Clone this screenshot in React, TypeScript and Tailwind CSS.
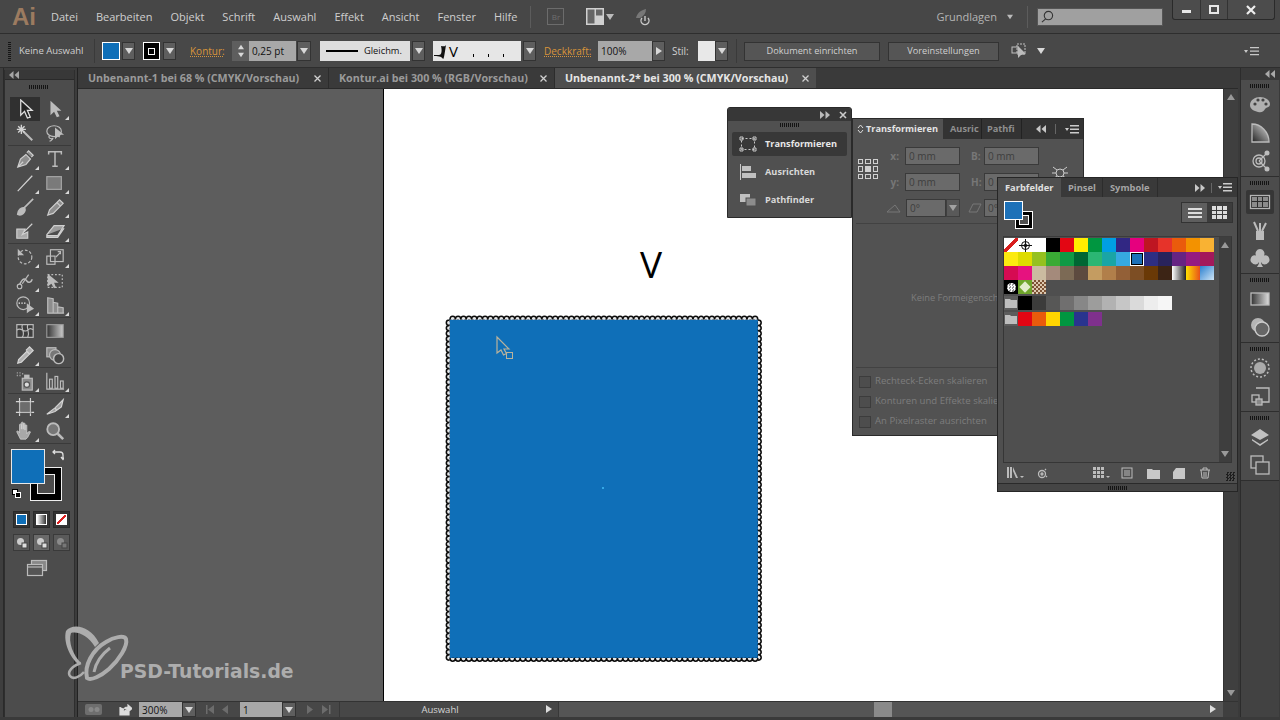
import React from 'react';

const G = '#bcbcbc';

const Tri = ({ dir = 'down', c = '#d8d8d8', s = 8 }: { dir?: string; c?: string; s?: number }) => {
  const d = dir === 'down' ? 'M0 1h8L4 7z' : dir === 'right' ? 'M1 0v8L7 4z' : dir === 'left' ? 'M7 0v8L1 4z' : 'M0 7h8L4 1z';
  return (
    <svg width={s} height={s} viewBox="0 0 8 8">
      <path d={d} fill={c} />
    </svg>
  );
};

const Drop = ({ className = '' }: { className?: string }) => (
  <div className={`flex items-center justify-center bg-[#5e5e5e] border border-[#333] ${className}`}>
    <Tri />
  </div>
);

const Grip = ({ className = '' }: { className?: string }) => (
  <div className={`h-[4px] bg-[repeating-linear-gradient(90deg,#141414_0,#141414_1px,transparent_1px,transparent_2px)] ${className}`} />
);

const Arrows = ({ dir = 'left', c = '#b5b5b5' }: { dir?: string; c?: string }) => (
  <svg width="10" height="8" viewBox="0 0 10 8">
    {dir === 'left' ? <path d="M4.500 0v8L0 4zM10 0v8L5.500 4z" fill={c} /> : <path d="M0 0v8l4.500-4zM5.500 0v8L10 4z" fill={c} />}
  </svg>
);

const Svg = ({ children, s = 22 }: { children: React.ReactNode; s?: number }) => (
  <svg width={s} height={s} viewBox="0 0 22 22" fill="none" stroke={G} strokeWidth="1.300">
    {children}
  </svg>
);

const toolIcons: Record<string, React.ReactNode> = {
  select: <path d="M6 1v16l4-4 3 7 3-1-3-7h5z" fill="#222" stroke="#e0e0e0" />,
  direct: <path d="M6 2v16l4-4 3 6 3-1-3-6h5z" fill={G} stroke="none" />,
  wand: (
    <>
      <path d="M9 9l10 10" strokeWidth="2.200" />
      <path d="M7 2v10M2 7h10M3.500 3.500l7 7M10.500 3.500l-7 7" strokeWidth="1.500" stroke="#d4d4d4" />
    </>
  ),
  lasso: (
    <>
      <ellipse cx="10" cy="9" rx="8" ry="6" />
      <path d="M5 14c-2 2 1 4 3 3s-1 3-3 3" />
      <path d="M11 5v13l3-3 2 1 1-3 4 0z" fill={G} stroke="none" />
    </>
  ),
  pen: <path d="M3 20l3-9 6-5 5 5-5 6zM3 20l6-6M13 4l2-2 5 5-2 2" fill="#8e8e8e" stroke="#cfcfcf" />,
  type: <path d="M4 6V3h14v3M11 3v16M8 19h6" strokeWidth="1.600" />,
  line: <path d="M3 20L19 3" strokeWidth="1.300" stroke="#d4d4d4" />,
  rect: <rect x="2" y="4" width="16" height="14" fill="#7a7a7a" stroke="#a5a5a5" />,
  brush: <path d="M20 2L10 12M3 19c0-4 4-8 7-7 2 1 1 4-1 6s-4 2-6 1z" fill={G} strokeWidth="1.800" />,
  pencil: <path d="M3 20l2-6L16 3l4 4L9 18zM13 6l4 4" fill="#8e8e8e" stroke="#cfcfcf" />,
  blob: <path d="M2 9h9l-3 6 6-3v7H2zM10 12l9-9" fill="#a8a8a8" stroke="#cfcfcf" />,
  eraser: <path d="M2 15L10 5h11l-7 11H2zM2 15v3h12l7-10" fill="#9c9c9c" stroke="#cfcfcf" />,
  rotate: (
    <>
      <circle cx="11" cy="11" r="7.500" strokeDasharray="3 2" />
      <path d="M3 2v7h7z" strokeWidth="0" fill={G} />
    </>
  ),
  scale: (
    <>
      <rect x="2" y="10" width="9" height="9" />
      <rect x="6" y="3" width="14" height="13" />
      <path d="M12 11l5-5M14 5h3v3" />
    </>
  ),
  warp: (
    <>
      <path d="M3 19c3-6 6-14 10-8 2 3 5 1 6-2" strokeWidth="1.600" />
      <circle cx="5" cy="17" r="2.500" fill="#444" />
      <path d="M8 14l7-10" />
    </>
  ),
  free: (
    <>
      <rect x="3" y="4" width="16" height="14" strokeDasharray="2 2" />
      <path d="M3 3v14l4-3 3 5 2-1-2-5h5z" fill={G} stroke="none" />
    </>
  ),
  shape: (
    <>
      <circle cx="9" cy="9" r="7" />
      <path d="M4 9h9" strokeDasharray="1.500 1.500" stroke="#eee" />
      <path d="M13 9v11l3-2 5-3z" fill={G} stroke="none" />
    </>
  ),
  persp: <path d="M3 3l6 1v16H3zM9 8l5 1v11H9zM14 13l6 1v6h-6zM3 20h18" fill="#8d8d8d" />,
  mesh: (
    <>
      <rect x="2" y="4" width="18" height="14" fill="#3d3d3d" />
      <path d="M2 10c5-4 8 4 12 0s4 0 6-1M8 4c-2 5 4 8 0 14M14 4c-2 5 3 8 0 14" />
    </>
  ),
  grad: (
    <>
      <defs>
        <linearGradient id="tg" x1="0" x2="1">
          <stop offset="0" stopColor="#333" />
          <stop offset="1" stopColor="#ccc" />
        </linearGradient>
      </defs>
      <rect x="2" y="4" width="18" height="14" fill="url(#tg)" stroke="#999" />
    </>
  ),
  eyedrop: <path d="M3 20l1-4 9-9 3 3-9 9zM12 6l2-2 2-2 4 4-4 4-2-2" fill="#b0b0b0" stroke="#d4d4d4" />,
  blend: (
    <>
      <rect x="2" y="3" width="10" height="10" fill="#8a8a8a" />
      <circle cx="11" cy="11" r="6" fill="#777" />
      <circle cx="15" cy="15" r="5.500" fill="#444" strokeWidth="1.600" />
    </>
  ),
  spray: (
    <>
      <rect x="8" y="8" width="11" height="13" fill="#8a8a8a" />
      <circle cx="13" cy="15" r="3" fill="#ddd" stroke="#555" />
      <rect x="10" y="4" width="6" height="4" fill={G} stroke="none" />
      <path d="M2 2h1M5 2h1M2 5h1M5 5h1M8 3h1" strokeWidth="1.500" />
    </>
  ),
  graph: (
    <>
      <path d="M2 2v18h19" />
      <rect x="5" y="9" width="3" height="10" />
      <rect x="11" y="6" width="3" height="13" />
      <rect x="17" y="11" width="3" height="8" />
    </>
  ),
  artboard: (
    <>
      <rect x="5" y="5" width="12" height="12" fill="#6d6d6d" />
      <path d="M1 5h20M1 17h20M5 1v20M17 1v20" stroke="#d4d4d4" strokeDasharray="5 12" />
    </>
  ),
  slice: <path d="M2 19l9-7 9-9-2 8-7 5zM11 12l2 3" fill="#a0a0a0" stroke="#d4d4d4" />,
  hand: <path d="M6 20L2 12c0-2 2-1 3 1V4c0-1 2-1 2 0v5-7c0-1 2-1 2 0v7-6c0-1 2-1 2 0v7-5c0-1 2-1 2 0v9c1-2 3-3 4-2l-3 6-2 2z" fill="#a8a8a8" stroke="#d4d4d4" strokeWidth="0.800" />,
  zoom: (
    <>
      <circle cx="9" cy="9" r="6.500" strokeWidth="2" fill="#777" />
      <path d="M14 14l6 6" strokeWidth="2.800" />
    </>
  ),
};

const toolGroups: [string, boolean, string, boolean][][] = [
  [
    ['select', false, 'direct', true],
    ['wand', false, 'lasso', false],
  ],
  [
    ['pen', true, 'type', true],
    ['line', true, 'rect', true],
    ['brush', false, 'pencil', true],
    ['blob', false, 'eraser', true],
  ],
  [
    ['rotate', true, 'scale', true],
    ['warp', true, 'free', false],
    ['shape', true, 'persp', true],
  ],
  [
    ['mesh', false, 'grad', false],
    ['eyedrop', true, 'blend', false],
  ],
  [['spray', true, 'graph', true]],
  [
    ['artboard', false, 'slice', true],
    ['hand', true, 'zoom', false],
  ],
];

const Tool = ({ name, fly }: { name: string; fly: boolean }) => (
  <div className={`relative w-[30px] h-[24px] flex items-center justify-center ${name === 'select' ? 'bg-[#303030]' : ''}`}>
    <Svg s={name === 'select' ? 21 : 20}>{toolIcons[name]}</Svg>
    {fly && <div className="absolute right-[1px] bottom-[1px] w-0 h-0 border-l-[4px] border-l-transparent border-b-[4px] border-b-[#d8d8d8]" />}
  </div>
);

const ToolBar = () => (
  <div className="w-[78px] bg-[#3c3c3c] flex border-r border-[#222]">
    <div className="w-[4px] bg-[#3e3e3e] border-r border-[#2a2a2a]" />
    <div className="w-[71px] bg-[#4c4c4c] border-x border-[#2e2e2e] flex flex-col mt-[2px] ml-[0px]">
      <div className="h-[10px] bg-[#383838] border-b border-[#2a2a2a] flex items-center pl-[4px] shrink-0">
        <Arrows c="#a5a5a5" />
      </div>
      <Grip className="w-[19px] mx-auto mt-[5px] mb-[8px] shrink-0 relative left-[-1px]" />
      {toolGroups.map((g, i) => (
        <div key={i} className="mx-[3px] pl-[2px] border-b border-[#3a3a3a] mb-[1px]">
          {g.map((r) => (
            <div key={r[0]} className="flex">
              <Tool name={r[0]} fly={r[1]} />
              <Tool name={r[2]} fly={r[3]} />
            </div>
          ))}
        </div>
      ))}
      <div className="relative h-[61px]">
        <div className="absolute left-[25px] top-[22px] w-[32px] h-[34px] bg-black border border-[#eee] flex items-center justify-center">
          <div className="w-[18px] h-[20px] bg-[#4c4c4c] border border-[#eee]" />
        </div>
        <div className="absolute left-[6px] top-[4px] w-[34px] h-[35px] bg-[#0f6fb8] border border-[#e8e8e8]" />
        <svg className="absolute left-[47px] top-[4px]" width="12" height="12" viewBox="0 0 12 12" fill="none" stroke="#ddd" strokeWidth="1.300">
          <path d="M1 3h7q3 0 3 3v4M3 1L1 3l2 2M9 8l2 2.500L13 8" />
        </svg>
        <div className="absolute left-[7px] top-[44px] w-[6px] h-[6px] bg-white border border-black" />
        <div className="absolute left-[10px] top-[47px] w-[6px] h-[6px] bg-black border border-white" />
      </div>
      <div className="flex gap-[3px] pl-[8px] mt-[5px]">
        <div className="w-[17px] h-[17px] bg-[#333] border border-[#2a2a2a] flex items-center justify-center">
          <div className="w-[11px] h-[11px] bg-[#0f6fb8] border border-white" />
        </div>
        <div className="w-[17px] h-[17px] bg-[#333] border border-[#2a2a2a] flex items-center justify-center">
          <div className="w-[11px] h-[11px] bg-[linear-gradient(90deg,#fff,#333)] border border-white" />
        </div>
        <div className="w-[17px] h-[17px] bg-[#333] border border-[#2a2a2a] flex items-center justify-center">
          <div className="w-[11px] h-[11px] bg-[linear-gradient(135deg,#fff_42%,#d22_42%,#d22_58%,#fff_58%)] border border-white" />
        </div>
      </div>
      <div className="flex gap-[3px] pl-[8px] mt-[6px]">
        {[0, 1, 2].map((i) => (
          <div key={i} className={`w-[17px] h-[17px] flex items-center justify-center border border-[#3a3a3a] ${i === 1 ? 'bg-[#6a6a6a]' : 'bg-[#5a5a5a]'}`}>
            <svg width="12" height="12" viewBox="0 0 12 12">
              <circle cx="4.500" cy="4.500" r="3.500" fill={i === 2 ? '#8a8a8a' : '#ccc'} />
              <rect x="6" y="6" width="5" height="5" fill={i === 2 ? '#777' : '#ddd'} stroke="#444" />
            </svg>
          </div>
        ))}
      </div>
      <div className="flex justify-center mt-[8px] pr-[5px]">
        <svg width="22" height="18" viewBox="0 0 22 18" fill="none" stroke="#bbb" strokeWidth="1.200">
          <rect x="5.500" y="1.500" width="15" height="10" fill="#888" />
          <rect x="1.500" y="5.500" width="15" height="11" fill="#555" />
          <path d="M1.500 8h15" />
        </svg>
      </div>
    </div>
  </div>
);

const swRows = [
  ['', 'reg', 'bg-white', 'bg-black', 'bg-[#e30613]', 'bg-[#ffed00]', 'bg-[#009640]', 'bg-[#009fe3]', 'bg-[#312783]', 'bg-[#e6007e]', 'bg-[#be1622]', 'bg-[#e6332a]', 'bg-[#ea5b0c]', 'bg-[#f39200]', 'bg-[#f9b233]'],
  ['bg-[#fcea10]', 'bg-[#dedc00]', 'bg-[#95c11f]', 'bg-[#3aaa35]', 'bg-[#0f9a45]', 'bg-[#006633]', 'bg-[#2bb673]', 'bg-[#1aa5a5]', 'bg-[#36a9e1]', 'sel', 'bg-[#2d2e83]', 'bg-[#29235c]', 'bg-[#662483]', 'bg-[#951b81]', 'bg-[#a3195b]'],
  ['bg-[#d60b52]', 'bg-[#e6127f]', 'bg-[#cbbba0]', 'bg-[#a48a7b]', 'bg-[#7c6a55]', 'bg-[#5d4a3f]', 'bg-[#c49c61]', 'bg-[#b17f4a]', 'bg-[#936037]', 'bg-[#7d4e24]', 'bg-[#6a3906]', 'bg-[#3c2415]', 'bg-[linear-gradient(90deg,#fff,#222)]', 'bg-[linear-gradient(90deg,#ffe000,#e8501a)]', 'bg-[linear-gradient(135deg,#2a80d0,#cfe4f5)]'],
];
const grays = ['bg-black', 'bg-[#3c3c3b]', 'bg-[#575756]', 'bg-[#706f6f]', 'bg-[#878787]', 'bg-[#9d9d9c]', 'bg-[#b2b2b2]', 'bg-[#c6c6c6]', 'bg-[#dadada]', 'bg-[#ededed]', 'bg-[#f6f6f6]'];
const brights = ['bg-[#e30613]', 'bg-[#ea5b0c]', 'bg-[#ffd500]', 'bg-[#009640]', 'bg-[#29348e]', 'bg-[#7f318d]'];

const Folder = () => (
  <div className="w-[14px] h-[14px] bg-[#5c5c5c] flex items-center justify-center">
    <svg width="12" height="10" viewBox="0 0 12 10">
      <path d="M0 1h5l1 1h6v8H0z" fill="#bdbdbd" />
    </svg>
  </div>
);

const Swatch = ({ c }: { c: string }) => {
  if (c === '')
    return <div className="w-[14px] h-[14px] bg-[linear-gradient(135deg,#fff_40%,#d81e1e_40%,#d81e1e_58%,#fff_58%)]" />;
  if (c === 'reg')
    return (
      <div className="w-[14px] h-[14px] bg-white flex items-center justify-center">
        <svg width="13" height="13" viewBox="0 0 13 13" fill="none" stroke="#111">
          <circle cx="6.500" cy="6.500" r="4" />
          <circle cx="6.500" cy="6.500" r="1.500" />
          <path d="M6.500 0v13M0 6.500h13" />
        </svg>
      </div>
    );
  if (c === 'sel')
    return (
      <div className="w-[14px] h-[14px] bg-black border border-white flex items-center justify-center">
        <div className="w-[10px] h-[10px] bg-[#1d71b8]" />
      </div>
    );
  return <div className={`w-[14px] h-[14px] ${c}`} />;
};

const SwatchPanel = () => (
  <div className="absolute left-[997px] top-[177px] w-[241px] h-[315px] bg-[#4f4f4f] border border-[#262626] flex flex-col">
    <div className="h-[19px] bg-[#393939] flex items-center text-[9.3px] font-bold text-[#a5a5a5] shrink-0">
      <div className="w-[63px] h-full bg-[#4f4f4f] text-[#e0e0e0] flex items-center pl-[7px]">Farbfelder</div>
      <div className="w-[42px] h-full flex items-center pl-[7px] border-r border-[#2c2c2c]">Pinsel</div>
      <div className="w-[55px] h-full flex items-center pl-[7px] border-r border-[#2c2c2c]">Symbole</div>
      <div className="flex-1 flex items-center justify-end pr-[5px] gap-[6px]">
        <Arrows dir="right" c="#c8c8c8" />
        <div className="w-[1px] h-[10px] bg-[#666]" />
        <svg width="14" height="9" viewBox="0 0 14 9" fill="#ccc">
          <path d="M0 3h4L2 6zM5 0h9v1.500H5zM5 3.500h9V5H5zM5 7h9v1.500H5z" />
        </svg>
      </div>
    </div>
    <div className="relative h-[39px] shrink-0">
      <div className="absolute left-[17px] top-[14px] w-[18px] h-[18px] bg-black border border-white flex items-center justify-center">
        <div className="w-[10px] h-[10px] bg-[#4f4f4f] border border-white" />
      </div>
      <div className="absolute left-[6px] top-[4px] w-[19px] h-[19px] bg-[#1d71b8] border border-white" />
      <div className="absolute right-[4px] top-[5px] flex bg-[#3c3c3c] border border-[#333]">
        <div className="w-[25px] h-[19px] bg-[#5e5e5e] flex flex-col items-center justify-center gap-[2px]">
          <div className="w-[14px] h-[2px] bg-[#ddd]" />
          <div className="w-[14px] h-[2px] bg-[#ddd]" />
          <div className="w-[14px] h-[2px] bg-[#ddd]" />
        </div>
        <div className="w-[25px] h-[19px] grid grid-cols-3 gap-[1px] px-[5px] py-[3px]">
          {[0, 1, 2, 3, 4, 5, 6, 7, 8].map((i) => (
            <div key={i} className="bg-[#ddd]" />
          ))}
        </div>
      </div>
    </div>
    <div className="mx-[5px] flex-1 flex border border-[#363636] border-t-[#3c3c3c]">
      <div className="flex-1 pt-[1px]">
        {swRows.map((r, i) => (
          <div key={i} className="flex">
            {r.map((c, j) => (
              <Swatch key={j} c={c} />
            ))}
          </div>
        ))}
        <div className="flex">
          <div className="w-[14px] h-[14px] bg-black flex items-center justify-center">
            <div className="w-[9px] h-[9px] rounded-full bg-[repeating-conic-gradient(#fff_0_25%,#999_0_50%)] bg-[length:3px_3px]" />
          </div>
          <div className="w-[14px] h-[14px] bg-[#6fa52c] flex items-center justify-center">
            <div className="w-[8px] h-[8px] rotate-45 bg-[#e3eccd]" />
          </div>
          <div className="w-[14px] h-[14px] bg-[repeating-conic-gradient(#7c5234_0_25%,#dcc9b0_0_50%)] bg-[length:4px_4px]" />
        </div>
        <div className="flex mt-[2px]">
          <Folder />
          {grays.map((c) => (
            <div key={c} className={`w-[14px] h-[14px] ${c}`} />
          ))}
        </div>
        <div className="flex mt-[2px]">
          <Folder />
          {brights.map((c) => (
            <div key={c} className={`w-[14px] h-[14px] ${c}`} />
          ))}
        </div>
      </div>
      <div className="w-[12px] bg-[#3e3e3e] flex flex-col items-center justify-between py-[4px]">
        <Tri dir="up" c="#9a9a9a" />
        <Tri c="#9a9a9a" />
      </div>
    </div>
    <div className="h-[20px] shrink-0 relative flex items-center text-[#c8c8c8]">
      <svg className="ml-[9px]" width="18" height="12" viewBox="0 0 18 12" fill={G}>
        <path d="M0 0h2v11H0zM3 0h2v11H3zM6 0l5 11H9L6 4zM13 9h4l-2 2z" />
      </svg>
      <svg className="ml-[12px]" width="11" height="11" viewBox="0 0 11 11" fill="none" stroke={G} strokeWidth="1.300">
        <circle cx="5" cy="6" r="3.500" />
        <circle cx="5" cy="6" r="1" />
        <path d="M8 1l1 1M9 8l1 1" />
      </svg>
      <svg className="ml-[45px]" width="18" height="12" viewBox="0 0 18 12" fill={G}>
        <path d="M0 0h3v3H0zM4 0h3v3H4zM8 0h3v3H8zM0 4h3v3H0zM4 4h3v3H4zM8 4h3v3H8zM0 8h3v3H0zM4 8h3v3H4zM8 8h3v3H8zM13 9h4l-2 2z" />
      </svg>
      <svg className="ml-[10px]" width="12" height="12" viewBox="0 0 12 12" fill="none" stroke={G}>
        <rect x="1" y="1" width="10" height="10" />
        <path d="M3 4h6M3 6h6M3 8h6" />
      </svg>
      <svg className="ml-[14px]" width="13" height="11" viewBox="0 0 13 11" fill="#c8c8c8">
        <path d="M0 1h5l1 1h7v9H0z" />
      </svg>
      <svg className="ml-[13px]" width="12" height="11" viewBox="0 0 12 11" fill="#c8c8c8">
        <path d="M3 0h9v11H0V4zM3 1v3H0" />
      </svg>
      <svg className="ml-[14px]" width="12" height="12" viewBox="0 0 12 12" fill="none" stroke={G}>
        <path d="M1 3h10M4 3V1h4v2M2 3l1 8h6l1-8M5 5v5M7 5v5" />
      </svg>
      <div className="absolute right-[2px] bottom-[2px] w-[9px] h-[9px] bg-[repeating-conic-gradient(#1e1e1e_0_25%,transparent_0_50%)] bg-[length:3px_3px]" />
    </div>
    <div className="h-[8px] shrink-0 border-t border-[#2a2a2a] bg-[#454545] flex items-center justify-center">
      <Grip className="w-[20px]" />
    </div>
  </div>
);

const Field = ({ v, w = 'w-[55px]' }: { v: string; w?: string }) => (
  <div className={`h-[18px] ${w} bg-[#6a6a6a] border border-[#3a3a3a] text-[10px] font-normal text-[#3e3e3e] flex items-center pl-[3px] leading-none`}>{v}</div>
);

const TransformPanel = () => (
  <div className="absolute left-[852px] top-[118px] w-[232px] h-[318px] bg-[#525252] border border-[#2a2a2a] flex flex-col">
    <div className="h-[20px] bg-[#333] flex items-center text-[9.2px] font-bold text-[#8f8f8f] shrink-0">
      <div className="w-[90px] h-full bg-[#525252] text-[#e4e4e4] flex items-center gap-[2px] pl-[4px]">
        <svg width="7" height="10" viewBox="0 0 7 10" fill="none" stroke="#ddd">
          <path d="M1 4l2.500-3L6 4M1 6l2.500 3L6 6" />
        </svg>
        Transformieren
      </div>
      <div className="w-[39px] h-full flex items-center pl-[7px] overflow-hidden whitespace-nowrap border-r border-[#222]">Ausric</div>
      <div className="w-[40px] h-full flex items-center pl-[5px] overflow-hidden whitespace-nowrap border-r border-[#222]">Pathfi</div>
      <div className="flex-1 flex items-center justify-end gap-[9px] pr-[4px]">
        <Arrows c="#c8c8c8" />
        <div className="w-[1px] h-[10px] bg-[#666]" />
        <svg width="14" height="9" viewBox="0 0 14 9" fill="#ccc">
          <path d="M0 3h4L2 6zM5 0h9v1.500H5zM5 3.500h9V5H5zM5 7h9v1.500H5z" />
        </svg>
      </div>
    </div>
    <div className="relative flex pt-[8px] pl-[2px] shrink-0 h-[85px] border-b border-[#424242] mx-[3px]">
      <div className="w-[20px] h-[20px] grid grid-cols-3 gap-[2px] mt-[12px]">
        {[0, 1, 2, 3, 4, 5, 6, 7, 8].map((i) => (
          <div key={i} className={`border border-[#d0d0d0] ${i === 4 ? 'bg-[#d0d0d0]' : ''}`} />
        ))}
      </div>
      <div className="ml-[11px] flex flex-col gap-[8px] text-[10px] text-[#777] font-bold">
        {['x:', 'y:'].map((l) => (
          <div key={l} className="flex items-center gap-[6px]">
            <span className="w-[10px] text-right">{l}</span>
            <Field v="0 mm" />
          </div>
        ))}
        <div className="flex items-center gap-[2px] -ml-[3px]">
          <svg width="18" height="10" viewBox="0 0 18 10" fill="none" stroke="#777">
            <path d="M1 9h13L9 2z" />
          </svg>
          <Field v="0°" w="w-[40px]" />
          <Drop className="w-[14px] h-[18px] -ml-[2px] opacity-60" />
        </div>
      </div>
      <div className="ml-[11px] flex flex-col gap-[8px] text-[10px] text-[#777] font-bold">
        {['B:', 'H:'].map((l) => (
          <div key={l} className="flex items-center gap-[6px]">
            <span className="w-[7px]">{l}</span>
            <Field v="0 mm" />
          </div>
        ))}
        <div className="flex items-center gap-[2px] -ml-[3px]">
          <svg width="14" height="10" viewBox="0 0 14 10" fill="none" stroke="#777">
            <path d="M1 9l4-8h8l-4 8z" />
          </svg>
          <Field v="0°" w="w-[40px]" />
        </div>
      </div>
      <svg className="ml-[11px] mt-[17px]" width="20" height="18" viewBox="0 0 20 18" fill="none" stroke="#ccc">
        <circle cx="10" cy="9" r="4" />
        <path d="M3 3l4 3M17 3l-4 3M2 9h4M18 9h-4M3 15l4-3M17 15l-4-3" />
      </svg>
    </div>
    <div className="h-[144px] border-b border-[#424242] mx-[3px] shrink-0 text-[9.3px] text-[#7d7d7d] pl-[55px] pt-[67px] whitespace-nowrap overflow-hidden">Keine Formeigenschaften</div>
    <div className="flex flex-col gap-[7px] pt-[7px] pl-[6px] text-[9.6px] text-[#7d7d7d] whitespace-nowrap">
      {['Rechteck-Ecken skalieren', 'Konturen und Effekte skalieren', 'An Pixelraster ausrichten'].map((t) => (
        <div key={t} className="flex items-center gap-[4px] h-[13px]">
          <div className="w-[12px] h-[12px] border border-[#3c3c3c] bg-[#4d4d4d]" />
          {t}
        </div>
      ))}
    </div>
  </div>
);

const PanelRowIcon = ({ k }: { k: number }) => (
  <svg width="18" height="16" viewBox="0 0 18 16" fill="none" stroke="#c8c8c8">
    {k === 0 && (
      <>
        <rect x="2.500" y="2.500" width="13" height="11" strokeDasharray="2 2" />
        <path d="M1 1h3v3H1zM14 1h3v3h-3zM1 12h3v3H1zM14 12h3v3h-3z" />
      </>
    )}
    {k === 1 && (
      <>
        <path d="M1.500 0v16" />
        <rect x="3" y="2" width="9" height="5" fill="#c0c0c0" stroke="none" />
        <rect x="3" y="9" width="14" height="5" fill="#c0c0c0" stroke="none" />
      </>
    )}
    {k === 2 && (
      <>
        <rect x="1" y="2" width="10" height="8" fill="#c0c0c0" stroke="none" />
        <rect x="7" y="6" width="10" height="8" fill="#8c8c8c" stroke="#4e4e4e" />
      </>
    )}
  </svg>
);

const IconPanel = () => (
  <div className="absolute left-[727px] top-[107px] w-[125px] h-[111px] bg-[#505050] border border-[#2a2a2a] rounded-t-[3px]">
    <div className="h-[13px] bg-[#373737] flex items-center justify-end gap-[9px] pr-[4px] rounded-t-[3px]">
      <Arrows dir="right" c="#bbb" />
      <svg width="8" height="8" viewBox="0 0 8 8" stroke="#ccc" strokeWidth="1.600">
        <path d="M1 1l6 6M7 1L1 7" />
      </svg>
    </div>
    <Grip className="w-[20px] mx-auto mt-[2px]" />
    <div className="flex flex-col gap-[4px] px-[4px] mt-[5px]">
      {['Transformieren', 'Ausrichten', 'Pathfinder'].map((t, i) => (
        <div key={t} className={`h-[24px] flex items-center gap-[8px] pl-[7px] text-[9.2px] font-bold rounded-[2px] ${i === 0 ? 'bg-[#383838] text-[#e8e8e8]' : 'text-[#d8d8d8]'}`}>
          <PanelRowIcon k={i} />
          {t}
        </div>
      ))}
    </div>
  </div>
);

const dockGroups: string[][] = [
  ['palette', 'gradfan', 'guide'],
  ['swatches', 'brushes', 'club'],
  ['gradient', 'trans'],
  ['appear', 'styles'],
  ['layers', 'boards'],
];

const dockIcons: Record<string, React.ReactNode> = {
  palette: (
    <>
      <path d="M1 11c0-5 5-8 10-8s10 3 10 7-4 3-5 5-3 4-7 3-8-3-8-7z" fill="#b0b0b0" stroke="none" />
      <circle cx="6" cy="10" r="1.600" fill="#444" stroke="none" />
      <circle cx="9" cy="6" r="1.600" fill="#444" stroke="none" />
      <circle cx="14" cy="6" r="1.600" fill="#444" stroke="none" />
      <circle cx="17" cy="10" r="1.600" fill="#444" stroke="none" />
    </>
  ),
  gradfan: (
    <>
      <defs>
        <linearGradient id="df" x1="0" x2="1" y1="1" y2="0">
          <stop offset="0" stopColor="#222" />
          <stop offset="1" stopColor="#ddd" />
        </linearGradient>
      </defs>
      <path d="M3 2c9 0 17 8 17 18H3z" fill="url(#df)" stroke="#bbb" />
    </>
  ),
  guide: (
    <>
      <circle cx="10" cy="11" r="6" />
      <circle cx="10" cy="11" r="3" />
      <path d="M10 11l8-8M10 11l8 8" />
      <circle cx="18" cy="3" r="2.500" fill={G} stroke="none" />
      <circle cx="18" cy="19" r="2.500" fill={G} stroke="none" />
    </>
  ),
  swatches: (
    <>
      <rect x="1.500" y="4.500" width="19" height="13" fill="#2c2c2c" stroke="#b5b5b5" />
      <path d="M3 6h5v4H3zM9 6h4v4H9zM14 6h5v4h-5zM3 11h5v5H3zM9 11h4v5H9zM14 11h5v5h-5z" fill="#8c8c8c" stroke="none" />
    </>
  ),
  brushes: (
    <>
      <rect x="7" y="12" width="8" height="9" fill={G} stroke="none" />
      <path d="M9 12L5 3M11 12V4M13 12l4-8" strokeWidth="2" />
    </>
  ),
  club: <path d="M11 2a4.500 4.500 0 0 1 4 6.500A4.500 4.500 0 1 1 12 15c0 2 1 3.500 2 5H8c1-1.500 2-3 2-5a4.500 4.500 0 1 1-3-6.500A4.500 4.500 0 0 1 11 2z" fill={G} stroke="none" />,
  gradient: (
    <>
      <defs>
        <linearGradient id="dg" x1="0" x2="1">
          <stop offset="0" stopColor="#333" />
          <stop offset="1" stopColor="#ddd" />
        </linearGradient>
      </defs>
      <rect x="2" y="5" width="18" height="12" fill="url(#dg)" stroke="#bbb" />
    </>
  ),
  trans: (
    <>
      <circle cx="9" cy="9" r="7" fill="#b5b5b5" stroke="none" />
      <circle cx="13" cy="13" r="7" fill="#666" stroke="#ccc" />
    </>
  ),
  appear: (
    <>
      <circle cx="11" cy="11" r="6" fill="#aaa" stroke="none" />
      <circle cx="11" cy="11" r="9" strokeDasharray="2 2" strokeWidth="1.500" />
    </>
  ),
  styles: (
    <>
      <path d="M7 3h13v14h-7" strokeWidth="1.300" />
      <rect x="3" y="10" width="7" height="7" />
      <rect x="7" y="14" width="6" height="6" fill="#888" />
    </>
  ),
  layers: <path d="M11 3l9 6-9 5-9-5zM3 13l8 5 8-5-0 1.500L11 20l-8-5.500z" fill="#c0c0c0" stroke="none" />,
  boards: (
    <>
      <rect x="2" y="2" width="12" height="12" />
      <rect x="7" y="8" width="13" height="12" fill="#4a4a4a" />
    </>
  ),
};

const Dock = () => (
  <div className="w-[39px] ml-[2px] mr-[1px] flex flex-col shrink-0 bg-[#424242] border-l border-[#2c2c2c]">
    <div className="h-[12px] bg-[#3a3a3a] flex items-center justify-end pr-[4px]">
      <Arrows c="#aaa" />
    </div>
    {dockGroups.map((g, i) => (
      <div key={i} className="bg-[#4c4c4c] border-b border-[#2e2e2e] flex flex-col items-center pt-[4px] pb-[3px]">
        <Grip className="w-[20px] mb-[5px]" />
        <div className="flex flex-col items-center gap-[4px]">
          {g.map((n) => (
            <div key={n} className={`w-[28px] h-[24px] flex items-center justify-center ${n === 'swatches' ? 'bg-[#363636] rounded-[2px]' : ''}`}>
              <Svg>{dockIcons[n]}</Svg>
            </div>
          ))}
        </div>
      </div>
    ))}
  </div>
);

// scalloped edge of the selected rectangle, in the coordinates of its own svg
const scallop = (() => {
  const step = 5.4;
  let d = '';
  for (let x = 6; x < 312; x += step) d += `M${x} 5.500a2.700 3.200 0 0 1 ${step} 0`;
  for (let x = 6; x < 312; x += step) d += `M${x} 344a2.700 3.200 0 0 0 ${step} 0`;
  for (let y = 6; y < 343; y += step) d += `M5.500 ${y}a3.200 2.700 0 0 0 0 ${step}`;
  for (let y = 6; y < 343; y += step) d += `M314 ${y}a3.200 2.700 0 0 1 0 ${step}`;
  return d;
})();

const Artboard = () => (
  <div className="flex-1 relative bg-white border-l border-black overflow-hidden">
    <span className="absolute left-[256px] top-[150px] text-[37px] leading-[50px] text-black font-normal">V</span>
    <svg className="absolute left-[60px] top-[225px]" width="322" height="350" viewBox="0 0 322 350">
      <rect x="5.500" y="5.500" width="308.500" height="338.500" fill="#0f6fb8" stroke="#0b2a4a" strokeDasharray="2 1.700" />
      <path d={scallop} fill="#e8e8e8" stroke="#0c0c0c" strokeWidth="1.500" />
      <path d="M53 23v16l4-3 2.500 5 3-1.500-2.500-4.500h5z" fill="none" stroke="#b9b29c" strokeWidth="1.200" />
      <rect x="62.500" y="38.500" width="6" height="6" fill="none" stroke="#b9b29c" />
      <path d="M158 173l2 2m0-2l-2 2" stroke="#35a7e6" />
    </svg>
  </div>
);

const CanvasRow = () => (
  <div className="flex-1 flex min-h-0">
    <div className="w-[305px] bg-[#5d5d5d]" />
    <Artboard />
    <div className="w-[15px] bg-[#3f3f3f] border-l border-[#333] flex flex-col items-center justify-between py-[4px]">
      <Tri dir="up" c="#999" />
      <Tri c="#999" />
    </div>
  </div>
);

const StatusBar = () => (
  <div className="h-[16px] bg-[#474747] border-t border-[#333] flex items-center text-[10px] shrink-0 relative">
    <svg className="ml-[7px]" width="17" height="11" viewBox="0 0 17 11" fill="#6e6e6e">
      <rect width="17" height="11" rx="2" />
      <circle cx="6" cy="5.500" r="2.500" fill="#888" />
      <circle cx="12" cy="5.500" r="2.500" fill="#888" />
    </svg>
    <svg className="ml-[17px]" width="13" height="12" viewBox="0 0 13 12" fill="none" stroke="#ddd" strokeWidth="1.200">
      <path d="M1 3v8h9V7M4 8c0-3 2-5 5-5V1l4 3.500L9 8V6C7 6 5 7 4 8z" fill="#ddd" />
    </svg>
    <div className="ml-[7px] w-[43px] h-[15px] bg-[#a8a8a8] text-[#111] flex items-center pl-[3px] leading-none">300%</div>
    <Drop className="w-[14px] h-[15px]" />
    <svg className="ml-[10px]" width="24" height="9" viewBox="0 0 24 9" fill="#6c6c6c">
      <path d="M0 0h1.500v9H0zM8 0v9L2 4.500zM22 0v9l-6-4.500z" />
    </svg>
    <div className="ml-[10px] w-[42px] h-[15px] bg-[#a8a8a8] text-[#111] flex items-center pl-[3px] leading-none">1</div>
    <Drop className="w-[14px] h-[15px]" />
    <svg className="ml-[11px]" width="24" height="9" viewBox="0 0 24 9" fill="#6c6c6c">
      <path d="M0 0v9l6-4.500zM15 0v9l6-4.500zM22 0h1.500v9H22z" />
    </svg>
    <div className="ml-[8px] w-[219px] h-full border-l border-[#383838] flex items-center justify-center pr-[18px] pt-[2px] text-[#d5d5d5] text-[9.5px] relative">
      Auswahl
      <div className="absolute right-[5px] top-[3px]">
        <Tri dir="right" c="#ddd" />
      </div>
    </div>
    <div className="flex-1 h-full border-l border-[#383838] bg-[#555] flex items-center relative">
      <div className="ml-[315px] w-[18px] h-full bg-[#8a8a8a]" />
      <div className="absolute right-[6px] top-[3px]">
        <Tri dir="right" c="#ddd" />
      </div>
    </div>
    <div className="w-[15px] h-full bg-[#3f3f3f]" />
  </div>
);

const TabBar = () => (
  <div className="h-[21px] bg-[#3a3a3a] flex text-[10.7px] font-bold text-[#9a9a9a] shrink-0 border-b border-[#2a2a2a]">
    {[
      ['Unbenannt-1 bei 68 % (CMYK/Vorschau)', 'w-[251px]', false],
      ['Kontur.ai bei 300 % (RGB/Vorschau)', 'w-[226px]', false],
      ['Unbenannt-2* bei 300 % (CMYK/Vorschau)', 'w-[261px]', true],
    ].map(([t, w, active]) => (
      <div key={t as string} className={`${w} h-full flex items-center justify-between pl-[10px] pr-[7px] whitespace-nowrap ${active ? 'bg-[#4e4e4e] text-[#e6e6e6]' : 'border-r border-[#2c2c2c]'}`}>
        <span>{t}</span>
        <svg width="7" height="7" viewBox="0 0 7 7" stroke="#d0d0d0" strokeWidth="1.300">
          <path d="M0.500 0.500l6 6M6.500 0.500l-6 6" />
        </svg>
      </div>
    ))}
  </div>
);

const MenuBar = () => (
  <div className="h-[34px] bg-[#474747] flex items-center shrink-0 relative border-b border-[#2e2e2e] text-[11px] text-[#cfcfcf]">
    <span className="ml-[12px] w-[39px] text-[24px] font-bold text-[#9c7b60] leading-none font-['Liberation_Sans']">Ai</span>
    <div className="flex gap-[18px] pt-[2px]">
      {['Datei', 'Bearbeiten', 'Objekt', 'Schrift', 'Auswahl', 'Effekt', 'Ansicht', 'Fenster', 'Hilfe'].map((m) => (
        <span key={m}>{m}</span>
      ))}
    </div>
    <div className="ml-[13px] w-[1px] h-[22px] bg-[#5c5c5c]" />
    <div className="ml-[16px] w-[17px] h-[17px] border border-[#6c6c6c] text-[8px] text-[#6f6f6f] flex items-center justify-center">Br</div>
    <svg className="ml-[22px]" width="18" height="17" viewBox="0 0 18 17">
      <rect width="18" height="17" fill="#d0d0d0" />
      <rect x="1.500" y="1.500" width="7" height="14" fill="#666" />
      <rect x="10" y="1.500" width="6.500" height="6" fill="#666" />
    </svg>
    <div className="ml-[2px]">
      <Tri c="#bbb" />
    </div>
    <svg className="ml-[20px]" width="18" height="18" viewBox="0 0 18 18" fill="none" stroke="#c8c8c8" strokeWidth="1.400">
      <path d="M2 10C3 5 7 2 12 1c0 4-2 7-6 9z" fill="#777" stroke="none" />
      <path d="M8 10a4 4 0 1 0 6 0M11 8v5" />
    </svg>
    <div className="flex-1" />
    <span className="text-[#b5b5b5] pt-[2px]">Grundlagen</span>
    <div className="ml-[10px]">
      <Tri c="#bbb" s={6} />
    </div>
    <div className="ml-[14px] w-[1px] h-[22px] bg-[#5c5c5c]" />
    <div className="ml-[9px] w-[126px] h-[18px] bg-[#a0a0a0] border border-[#555] flex items-center pl-[3px]">
      <svg width="13" height="13" viewBox="0 0 14 14" fill="none" stroke="#333" strokeWidth="1.200">
        <circle cx="8" cy="6" r="4.500" />
        <path d="M5 9.500L1 13" />
      </svg>
    </div>
    <div className="ml-[9px] mr-[5px] self-start w-[103px] h-[20px] flex border border-[#2a2a2a] border-t-0 rounded-b-[3px] bg-[#4c4c4c]">
      <div className="w-[28px] border-r border-[#333] flex items-center justify-center">
        <div className="w-[9px] h-[3px] bg-[#e8e8e8] mt-[4px]" />
      </div>
      <div className="w-[27px] border-r border-[#333] flex items-center justify-center">
        <div className="w-[10px] h-[9px] border-2 border-[#e8e8e8]" />
      </div>
      <div className="flex-1 flex items-center justify-center">
        <svg width="10" height="10" viewBox="0 0 10 10" stroke="#eee" strokeWidth="2.200">
          <path d="M1 1l8 8M9 1L1 9" />
        </svg>
      </div>
    </div>
  </div>
);

const ControlBar = () => (
  <div className="h-[34px] bg-[#484848] flex items-center shrink-0 border-b border-[#2e2e2e] text-[10px] text-[#d0d0d0] pt-[1px]">
    <div className="ml-[8px] w-[3px] h-[20px] bg-[repeating-linear-gradient(0deg,#161616_0,#161616_1px,transparent_1px,transparent_2px)]" />
    <span className="ml-[8px] w-[75px] whitespace-nowrap text-[9.5px]">Keine Auswahl</span>
    <div className="w-[1px] h-[24px] bg-[#3a3a3a]" />
    <div className="ml-[7px] w-[18px] h-[18px] bg-[#0f6fb8] border border-white" />
    <Drop className="ml-[2px] w-[13px] h-[18px]" />
    <div className="ml-[8px] w-[17px] h-[18px] bg-black border border-white flex items-center justify-center">
      <div className="w-[7px] h-[7px] border border-white" />
    </div>
    <Drop className="ml-[3px] w-[13px] h-[18px]" />
    <span className="ml-[14px] w-[42px] text-[#d8943a] underline decoration-dotted whitespace-nowrap">Kontur:</span>
    <div className="w-[17px] h-[20px] bg-[#5e5e5e] flex flex-col items-center justify-center gap-[2px]">
      <Tri dir="up" s={6} />
      <Tri s={6} />
    </div>
    <div className="w-[47px] h-[20px] bg-[#a8a8a8] text-[#111] flex items-center pl-[3px]">0,25 pt</div>
    <Drop className="ml-[1px] w-[14px] h-[20px]" />
    <div className="ml-[9px] w-[90px] h-[20px] bg-[#dedede] text-[#111] text-[9.3px] flex items-center pl-[6px] gap-[6px] whitespace-nowrap">
      <div className="w-[32px] h-[2px] bg-black" />
      Gleichm.
    </div>
    <Drop className="ml-[2px] w-[13px] h-[20px]" />
    <div className="ml-[8px] w-[88px] h-[20px] bg-[#e6e6e6] text-black flex items-center">
      <svg width="15" height="18" viewBox="0 0 15 18" fill="#111">
        <path d="M1 13h5c3 0 3-5 2-9 2 0 4 1 5-1-1 6-2 14-3 14-1-2-3-3-9-3z" />
      </svg>
      <span className="text-[15px] leading-[20px] ml-[1px]">V</span>
      <div className="ml-[15px] w-[1px] h-[3px] bg-black mt-[8px]" />
      <div className="ml-[14px] w-[1px] h-[3px] bg-black mt-[8px]" />
      <div className="ml-[14px] w-[1px] h-[3px] bg-black mt-[8px]" />
    </div>
    <Drop className="ml-[2px] w-[13px] h-[20px]" />
    <span className="ml-[8px] w-[54px] text-[#d8943a] underline decoration-dotted whitespace-nowrap">Deckkraft:</span>
    <div className="w-[54px] h-[20px] bg-[#a8a8a8] text-[#111] flex items-center pl-[3px]">100%</div>
    <div className="w-[13px] h-[20px] bg-[#5e5e5e] border border-[#333] flex items-center justify-center">
      <Tri dir="right" />
    </div>
    <span className="ml-[7px] w-[26px]">Stil:</span>
    <div className="w-[17px] h-[20px] bg-[#e8e8e8]" />
    <Drop className="w-[13px] h-[20px]" />
    <div className="ml-[8px] w-[1px] h-[24px] bg-[#3a3a3a]" />
    <div className="ml-[7px] w-[136px] h-[19px] bg-[#555] border border-[#333] text-[9.2px] flex items-center justify-center">Dokument einrichten</div>
    <div className="ml-[8px] w-[111px] h-[19px] bg-[#555] border border-[#333] text-[9.2px] flex items-center justify-center">Voreinstellungen</div>
    <svg className="ml-[12px]" width="16" height="16" viewBox="0 0 16 16" fill="none" stroke="#c0c0c0">
      <rect x="1" y="4" width="6" height="6" />
      <rect x="6" y="1" width="8" height="10" strokeDasharray="2 1" />
      <path d="M7 3v12l3-3 5-1z" fill="#bbb" stroke="none" />
    </svg>
    <div className="ml-[10px]">
      <Tri />
    </div>
    <div className="flex-1" />
    <svg className="mr-[21px]" width="15" height="9" viewBox="0 0 15 9" fill="#c8c8c8">
      <path d="M0 3h4L2 6zM6 0h9v1.300H6zM6 3.500h9v1.300H6zM6 7h9v1.300H6z" />
    </svg>
  </div>
);

const Watermark = () => (
  <div className="absolute left-[60px] top-[622px] w-[240px] h-[64px]">
    <svg className="absolute left-0 top-0" width="72" height="64" viewBox="0 0 72 64" fill="none" stroke="#adadad">
      <path d="M6 9C12 1 30 3 39 21l-4 4C28 13 17 9 11 11 8 20 13 33 21 41l-3 1C10 35 3 20 6 9z" fill="#adadad" stroke="none" />
      <path d="M21 41C12 44 7 50 10 54c3 4 10 1 14-4" strokeWidth="2.500" />
      <path d="M27 56c-3-12 5-28 19-36 8-5 18-7 20-3 2 7-7 21-17 30-8 7-18 12-22 9z" strokeWidth="4" />
      <path d="M34 50c2-10 8-18 16-24" strokeWidth="3" />
    </svg>
    <span className="absolute left-[60px] top-[37px] text-[18.8px] font-bold text-[#adadad] whitespace-nowrap leading-[26px] font-['DejaVu_Sans']">PSD-Tutorials.de</span>
  </div>
);

export default function App() {
  return (
    <div className="relative w-[1280px] h-[720px] overflow-hidden bg-[#3a3a3a] flex flex-col font-['Open_Sans',sans-serif]">
      <MenuBar />
      <ControlBar />
      <div className="flex-1 flex min-h-0 pb-[3px]">
        <ToolBar />
        <div className="flex-1 flex flex-col min-w-0">
          <TabBar />
          <CanvasRow />
          <StatusBar />
        </div>
        <Dock />
      </div>
      <IconPanel />
      <TransformPanel />
      <SwatchPanel />
      <Watermark />
    </div>
  );
}
